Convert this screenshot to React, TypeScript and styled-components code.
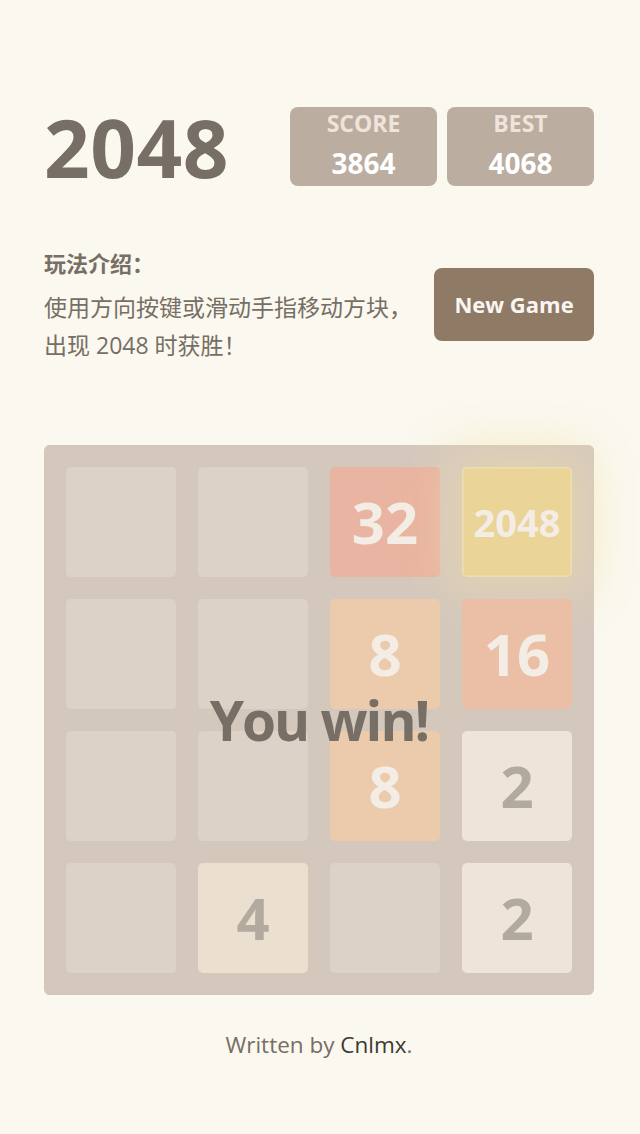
import React from "react";
import styled, { createGlobalStyle, css } from "styled-components";

const GlobalStyle = createGlobalStyle`
  html, body {
    margin: 0;
    padding: 0;
    background: #faf8ef;
  }
  body {
    font-family: "Open Sans", "Noto Sans CJK SC", sans-serif;
    color: #776e65;
  }
`;

const Page = styled.div`
  width: 550px;
  margin: 0 46px 0 44px;
  padding-top: 107px;
  padding-bottom: 40px;
`;

const Header = styled.header`
  display: flex;
  align-items: center;
  justify-content: space-between;
  height: 79px;
`;

const Title = styled.h1`
  margin: 0;
  font-size: 80px;
  line-height: 80px;
  font-weight: 700;
  color: #776e65;
  letter-spacing: 0.5px;
`;

const Scores = styled.div`
  display: flex;
  gap: 10px;
  width: 304px;
`;

const ScoreBox = styled.div`
  flex: 1;
  height: 79px;
  box-sizing: border-box;
  padding-top: 4px;
  border-radius: 8px;
  background: #bbada0;
  display: flex;
  flex-direction: column;
  align-items: center;
`;

const ScoreLabel = styled.div`
  font-size: 23px;
  line-height: 24px;
  font-weight: 700;
  color: #eee4da;
`;

const ScoreValue = styled.div`
  margin-top: 12px;
  font-size: 28px;
  line-height: 32px;
  font-weight: 700;
  color: #ffffff;
`;

const Intro = styled.section`
  margin-top: 58px;
  display: flex;
  align-items: center;
  justify-content: space-between;
`;

const IntroText = styled.div`
  display: flex;
  flex-direction: column;
  gap: 6px;
`;

const IntroHeading = styled.div`
  font-size: 22px;
  line-height: 38px;
  font-weight: 700;
  color: #776e65;
`;

const IntroBody = styled.p`
  margin: 0;
  font-size: 23px;
  line-height: 38px;
  color: #776e65;
  white-space: nowrap;
`;

const NewGame = styled.button`
  width: 160px;
  height: 73px;
  border: none;
  border-radius: 8px;
  background: #8f7a66;
  color: #f9f6f2;
  font-family: "Open Sans", sans-serif;
  font-size: 22px;
  font-weight: 700;
  cursor: pointer;
  padding: 0;
`;

const Board = styled.div`
  position: relative;
  margin-top: 81px;
  width: 550px;
  height: 550px;
  box-sizing: border-box;
  padding: 22px;
  border-radius: 6px;
  background: #bbada0;
  display: grid;
  grid-template-columns: repeat(4, 110px);
  grid-template-rows: repeat(4, 110px);
  gap: 22px;
`;

type TileStyle = { bg: string; fg: string; size: number };

const tileStyles: Record<number, TileStyle> = {
  0: { bg: "rgba(238, 228, 218, 0.35)", fg: "transparent", size: 58 },
  2: { bg: "#eee4da", fg: "#776e65", size: 58 },
  4: { bg: "#e8dcc6", fg: "#776e65", size: 58 },
  8: { bg: "#e8b27c", fg: "#f9f6f2", size: 58 },
  16: { bg: "#e89a70", fg: "#f9f6f2", size: 58 },
  32: { bg: "#e48468", fg: "#f9f6f2", size: 58 },
  2048: { bg: "#e6c454", fg: "#f9f6f2", size: 38 },
};

const Tile = styled.div<{ $v: number }>`
  border-radius: 5px;
  display: flex;
  align-items: center;
  justify-content: center;
  font-weight: 700;
  background: ${(p) => tileStyles[p.$v].bg};
  color: ${(p) => tileStyles[p.$v].fg};
  font-size: ${(p) => tileStyles[p.$v].size}px;
  line-height: 1;
  ${(p) =>
    p.$v === 2048 &&
    css`
      box-shadow: 0 0 44px 16px rgba(243, 215, 116, 0.45),
        inset 0 0 0 1.5px rgba(255, 255, 255, 0.35);
    `}
`;

const WinOverlay = styled.div`
  position: absolute;
  inset: 0;
  z-index: 2;
  border-radius: 6px;
  background: rgba(238, 228, 218, 0.5);
  display: flex;
  justify-content: center;
`;

const WinText = styled.p`
  margin: 245px 0 0;
  height: 60px;
  font-size: 55px;
  line-height: 60px;
  font-weight: 700;
  letter-spacing: -2px;
  color: #776e65;
`;

const Footer = styled.footer`
  margin-top: 35px;
  text-align: center;
  font-size: 22.5px;
  line-height: 30px;
  color: #776e65;
`;

const Author = styled.a`
  color: #3c3834;
  text-decoration: none;
`;

const board: number[] = [
  0, 0, 32, 2048,
  0, 0, 8, 16,
  0, 0, 8, 2,
  0, 4, 0, 2,
];

export default function App() {
  return (
    <>
      <GlobalStyle />
      <Page>
        <Header>
          <Title>2048</Title>
          <Scores>
            <ScoreBox>
              <ScoreLabel>SCORE</ScoreLabel>
              <ScoreValue>3864</ScoreValue>
            </ScoreBox>
            <ScoreBox>
              <ScoreLabel>BEST</ScoreLabel>
              <ScoreValue>4068</ScoreValue>
            </ScoreBox>
          </Scores>
        </Header>
        <Intro>
          <IntroText>
            <IntroHeading>玩法介绍：</IntroHeading>
            <IntroBody>
              使用方向按键或滑动手指移动方块，
              <br />
              出现 2048 时获胜！
            </IntroBody>
          </IntroText>
          <NewGame>New Game</NewGame>
        </Intro>
        <Board>
          {board.map((v, i) => (
            <Tile key={i} $v={v}>
              {v > 0 ? v : ""}
            </Tile>
          ))}
          <WinOverlay>
            <WinText>You win!</WinText>
          </WinOverlay>
        </Board>
        <Footer>
          Written by <Author href="#">Cnlmx</Author>.
        </Footer>
      </Page>
    </>
  );
}
